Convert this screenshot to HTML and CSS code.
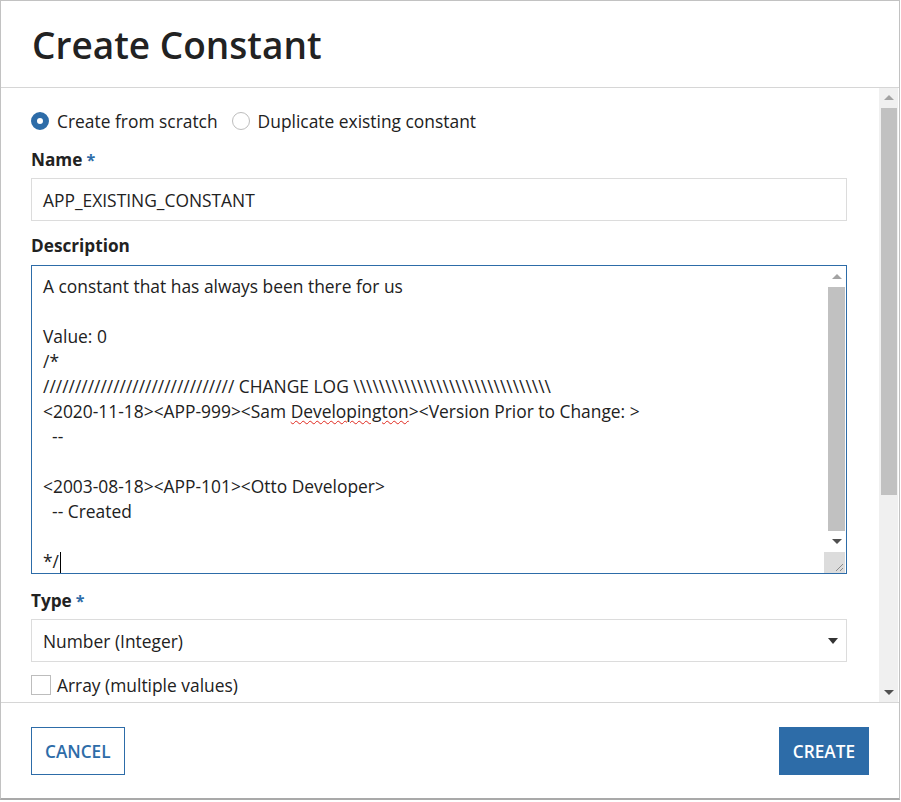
FILE: index.html
```html
<!DOCTYPE html>
<html lang="en">
<head>
<meta charset="utf-8">
<title>Create Constant</title>
<link rel="stylesheet" href="styles.css">
</head>
<body>
<div class="dialog">
  <header class="dlg-header">
    <h1 class="dlg-title">Create Constant</h1>
  </header>
  <div class="dlg-body">
    <div class="body-content">
      <div class="radio-row">
        <label class="radio-opt"><span class="radio checked"></span><span>Create from scratch</span></label>
        <label class="radio-opt"><span class="radio"></span><span>Duplicate existing constant</span></label>
      </div>
      <div class="field">
        <div class="field-label">Name<span class="req">*</span></div>
        <div class="text-input">APP_EXISTING_CONSTANT</div>
      </div>
      <div class="field">
        <div class="field-label">Description</div>
        <div class="textarea">
          <div class="textarea-text">A constant that has always been there for us

Value: 0
/*
////////////////////////////// CHANGE LOG \\\\\\\\\\\\\\\\\\\\\\\\\\\\\\\
&lt;2020-11-18&gt;&lt;APP-999&gt;&lt;Sam <span class="misspelled">Developington</span>&gt;&lt;Version Prior to Change: &gt;
  --

&lt;2003-08-18&gt;&lt;APP-101&gt;&lt;Otto Developer&gt;
  -- Created

*/<span class="caret"></span></div>
          <div class="ta-scroll">
            <div class="sb-btn"><span class="arrow-up light"></span></div>
            <div class="sb-track"><div class="ta-thumb"></div></div>
            <div class="sb-btn"><span class="arrow-down"></span></div>
            <div class="resize-corner">
              <svg width="21" height="21" viewBox="0 0 21 21"><path d="M19 12 L12 19 M19 16 L16 19" stroke="#8a8a8a" stroke-width="1" fill="none"/></svg>
            </div>
          </div>
        </div>
      </div>
      <div class="field field-type">
        <div class="field-label">Type<span class="req">*</span></div>
        <div class="select">
          <span>Number (Integer)</span>
          <span class="select-caret"></span>
        </div>
      </div>
      <label class="check-row"><span class="checkbox"></span><span>Array (multiple values)</span></label>
    </div>
    <div class="vscroll">
      <div class="vs-btn"><span class="arrow-up light"></span></div>
      <div class="vs-track"><div class="vs-thumb"></div></div>
      <div class="vs-btn"><span class="arrow-down"></span></div>
    </div>
  </div>
  <footer class="dlg-footer">
    <button class="btn btn-outline">CANCEL</button>
    <button class="btn btn-primary">CREATE</button>
  </footer>
</div>
</body>
</html>
```
FILE: styles.css
```css
html, body {
  margin: 0;
  padding: 0;
  background: #ffffff;
}
body {
  font-family: "Open Sans", "Liberation Sans", sans-serif;
  font-size: 17.4px;
  color: #212121;
}
.dialog {
  box-sizing: border-box;
  width: 900px;
  height: 800px;
  border: 1px solid #c2c2c2;
  border-bottom: 2px solid #a9a9a9;
  display: flex;
  flex-direction: column;
  background: #fff;
}
.dlg-header {
  height: 86px;
  border-bottom: 1px solid #d6d6d6;
  display: flex;
  align-items: center;
  padding-left: 31px;
  flex: none;
}
.dlg-title {
  margin: 0;
  font-size: 37px;
  font-weight: 600;
  color: #222;
  line-height: 44px;
  padding-top: 2px;
}
.dlg-body {
  height: 614px;
  flex: none;
  display: flex;
  overflow: hidden;
}
.body-content {
  flex: 1;
  padding: 21px 32px 0 30px;
  overflow: hidden;
}
.vscroll {
  width: 19px;
  margin-right: 1px;
  background: #f0f0f0;
  display: flex;
  flex-direction: column;
  flex: none;
}
.vs-btn {
  height: 19px;
  display: flex;
  align-items: center;
  justify-content: center;
  flex: none;
}
.vs-track {
  flex: 1;
  padding: 1px 1px 0 2px;
}
.vs-thumb {
  height: 387px;
  background: #c1c1c1;
}
.arrow-up {
  width: 0;
  height: 0;
  border-left: 5px solid transparent;
  border-right: 5px solid transparent;
  border-bottom: 5px solid #505050;
}
.arrow-up.light {
  border-bottom-color: #a3a3a3;
}
.arrow-down {
  width: 0;
  height: 0;
  border-left: 5px solid transparent;
  border-right: 5px solid transparent;
  border-top: 5px solid #505050;
}
.radio-row {
  display: flex;
  align-items: center;
  gap: 14px;
  height: 24px;
  line-height: 24px;
}
.radio-opt {
  display: flex;
  align-items: center;
  gap: 8px;
}
.radio {
  box-sizing: border-box;
  width: 18px;
  height: 18px;
  border-radius: 50%;
  border: 1px solid #bdbdbd;
  background: #fff;
  flex: none;
}
.radio.checked {
  border: 6px solid #2d6ca8;
  background: #fff;
}
.field {
  margin-top: 14px;
}
.field + .field {
  margin-top: 12px;
}
.field + .field-type {
  margin-top: 14px;
}
.field-label {
  font-weight: 700;
  font-size: 17.2px;
  line-height: 24px;
  padding-top: 1px;
  margin-bottom: 6px;
  color: #222;
}
.req {
  color: #2d6ca8;
  margin-left: 4px;
  font-size: 16px;
}
.text-input {
  box-sizing: border-box;
  height: 43px;
  border: 1px solid #dcdcdc;
  padding: 0 11px;
  display: flex;
  align-items: center;
}
.textarea {
  box-sizing: border-box;
  height: 309px;
  border: 1px solid #2d6ca8;
  display: flex;
  margin-top: 7px;
}
.textarea-text {
  flex: 1;
  white-space: pre;
  line-height: 25px;
  padding: 8px 11px 0 11px;
  overflow: hidden;
}
.misspelled {
  text-decoration: underline wavy #e0281e;
  text-decoration-thickness: 1px;
  text-underline-offset: 2px;
}
.caret {
  display: inline-block;
  width: 1px;
  height: 22px;
  background: #000;
  vertical-align: -6px;
  margin-left: 1px;
}
.ta-scroll {
  width: 17px;
  margin-right: 1px;
  display: flex;
  flex-direction: column;
  flex: none;
  background: #fff;
}
.sb-btn {
  height: 21px;
  display: flex;
  align-items: center;
  justify-content: center;
  flex: none;
}
.sb-track {
  flex: 1;
}
.ta-thumb {
  height: 100%;
  background: #c1c1c1;
}
.resize-corner {
  height: 21px;
  width: 21px;
  margin-left: -4px;
  background: #dcdcdc;
  flex: none;
}
.resize-corner svg {
  display: block;
}
.select {
  box-sizing: border-box;
  height: 43px;
  border: 1px solid #dcdcdc;
  padding: 0 8px 0 11px;
  display: flex;
  align-items: center;
  justify-content: space-between;
}
.select-caret {
  width: 0;
  height: 0;
  border-left: 5px solid transparent;
  border-right: 5px solid transparent;
  border-top: 6px solid #333;
}
.check-row {
  display: flex;
  align-items: center;
  gap: 6px;
  margin-top: 11px;
  line-height: 24px;
}
.checkbox {
  box-sizing: border-box;
  width: 20px;
  height: 20px;
  border: 1px solid #bdbdbd;
  background: #fff;
}
.dlg-footer {
  flex: 1;
  border-top: 1px solid #d6d6d6;
  display: flex;
  justify-content: space-between;
  align-items: flex-start;
  padding: 24px 30px 0 30px;
}
.btn {
  box-sizing: border-box;
  height: 48px;
  font-family: "Open Sans", "Liberation Sans", sans-serif;
  font-size: 17.2px;
  font-weight: 600;
  padding: 0 13px;
  cursor: pointer;
}
.btn-outline {
  background: #fff;
  color: #2d6ca8;
  border: 1px solid #2d6ca8;
}
.btn-primary {
  background: #2d6ca8;
  color: #fff;
  border: 1px solid #2d6ca8;
}
```
